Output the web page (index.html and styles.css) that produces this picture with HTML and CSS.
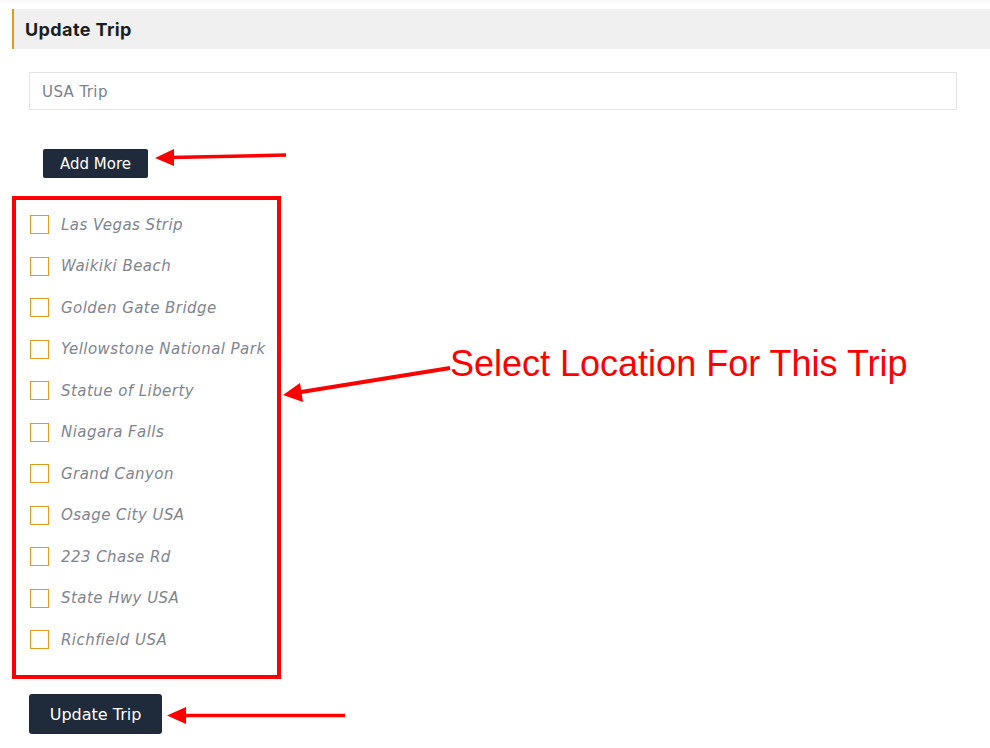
FILE: index.html
```html
<!DOCTYPE html>
<html lang="en">

<head>
    <meta charset="UTF-8">
    <meta name="viewport" content="width=device-width, initial-scale=1.0">
    <title>Update Trip</title>
    <link rel="stylesheet" href="styles.css">
</head>

<body>
    <div class="top-strip"></div>
    <div class="page">
        <div class="panel-head">
            <h3>Update Trip</h3>
        </div>

        <form class="trip-form" onsubmit="return false">
            <input type="text" class="trip-name" value="USA Trip">

            <button type="button" class="btn btn-small">Add More</button>

            <div class="location-box">
                <label class="location"><span class="check"></span>Las Vegas Strip</label>
                <label class="location"><span class="check"></span>Waikiki Beach</label>
                <label class="location"><span class="check"></span>Golden Gate Bridge</label>
                <label class="location"><span class="check"></span>Yellowstone National Park</label>
                <label class="location"><span class="check"></span>Statue of Liberty</label>
                <label class="location"><span class="check"></span>Niagara Falls</label>
                <label class="location"><span class="check"></span>Grand Canyon</label>
                <label class="location"><span class="check"></span>Osage City USA</label>
                <label class="location"><span class="check"></span>223 Chase Rd</label>
                <label class="location"><span class="check"></span>State Hwy USA</label>
                <label class="location"><span class="check"></span>Richfield USA</label>
            </div>

            <button type="submit" class="btn btn-big">Update Trip</button>
        </form>
    </div>

    <!-- annotation arrows drawn over the page -->
    <svg class="arrows" width="990" height="748" viewBox="0 0 990 748">
        <g fill="#ff0000" stroke="#ff0000">
            <line x1="286" y1="155" x2="170" y2="157.5" stroke-width="3.5" />
            <polygon points="155,158 174,149 174,166" stroke="none" />

            <line x1="450" y1="368" x2="298" y2="392.5" stroke-width="4" />
            <polygon points="283,395 300,383 303,402" stroke="none" />

            <line x1="345" y1="715.5" x2="182" y2="715.5" stroke-width="3.5" />
            <polygon points="167,715.5 186,707 186,724" stroke="none" />
        </g>
    </svg>
    <div class="note">Select Location For This Trip</div>
</body>

</html>
```

FILE: styles.css
```css
* {
    box-sizing: border-box;
    margin: 0;
    padding: 0;
}

body {
    font-family: "DejaVu Sans", Arial, sans-serif;
    background-color: #fff;
    position: relative;
    width: 990px;
    height: 748px;
    overflow: hidden;
}

.top-strip {
    height: 3px;
    background-color: #fafafa;
}

.page {
    padding-top: 6px;
}

.panel-head {
    margin-left: 12px;
    height: 40px;
    background-color: #f0f0f0;
    border-left: 2px solid #e39b21;
    padding-left: 11px;
    display: flex;
    align-items: center;
}

.panel-head h3 {
    font-family: Inter, "Open Sans", sans-serif;
    font-size: 18px;
    font-weight: 700;
    color: #1a1d24;
    letter-spacing: 0.4px;
}

.trip-form {
    display: flex;
    flex-direction: column;
    align-items: flex-start;
}

.trip-name {
    margin: 23px 0 0 29px;
    width: 928px;
    height: 38px;
    border: 1px solid #e4e4e4;
    padding: 2px 12px 0;
    font-family: "DejaVu Sans", sans-serif;
    font-size: 15px;
    letter-spacing: 0.4px;
    color: #7c818c;
    outline: none;
}

.btn {
    background-color: #1f2a3a;
    color: #fff;
    border: none;
    border-radius: 2px;
    font-family: "DejaVu Sans", sans-serif;
    cursor: pointer;
}

.btn-small {
    margin: 39px 0 0 43px;
    width: 105px;
    height: 29px;
    font-size: 15px;
}

.btn-big {
    margin: 15px 0 0 29px;
    width: 133px;
    height: 40px;
    font-size: 16px;
    border-radius: 3px;
}

.location-box {
    margin: 18px 0 0 12px;
    width: 269px;
    height: 483px;
    border: 4px solid #ff0000;
    padding: 4px 0 0 14px;
}

.location {
    display: flex;
    align-items: center;
    height: 41.5px;
    font-size: 15px;
    letter-spacing: 0.45px;
    font-style: italic;
    color: #80858f;
    white-space: nowrap;
}

.check {
    width: 19px;
    height: 19px;
    border: 1.5px solid #e39b21;
    margin-right: 12px;
    flex-shrink: 0;
}

.arrows {
    position: absolute;
    left: 0;
    top: 0;
    pointer-events: none;
}

.note {
    position: absolute;
    left: 450px;
    top: 343px;
    font-family: "Liberation Sans", Arial, sans-serif;
    font-size: 36px;
    color: #ff0000;
    white-space: nowrap;
}
```
